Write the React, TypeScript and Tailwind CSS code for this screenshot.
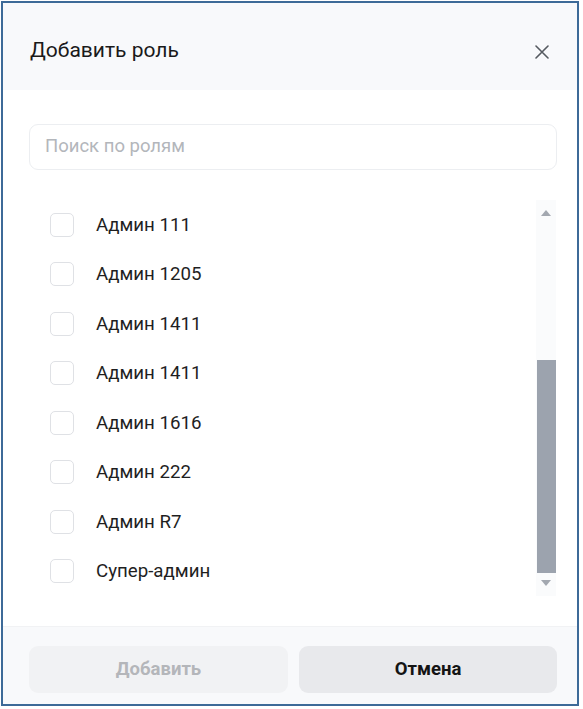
import React, { FC } from "react";

const roles = [
  "Админ 111",
  "Админ 1205",
  "Админ 1411",
  "Админ 1411",
  "Админ 1616",
  "Админ 222",
  "Админ R7",
  "Супер-админ",
];

const RoleRow: FC<{ name: string }> = ({ name }) => (
  <div className="flex h-[49.5px] items-center">
    <span className="ml-[47px] h-[24px] w-[24px] rounded-[5px] border border-[#dfe1e5] bg-white" />
    <span className="ml-[22px] text-[18.7px] text-[#1f1f1f]">{name}</span>
  </div>
);

// Fake scrollbar, matches the screenshot's native bar
const ScrollBar: FC = () => (
  <div className="flex w-[20px] flex-col items-center bg-[#fafbfc]">
    <div className="flex h-[26px] items-center justify-center">
      <svg width="10" height="6" viewBox="0 0 10 6">
        <path d="M5 0 L10 6 L0 6 Z" fill="#a3a8b0" />
      </svg>
    </div>
    <div className="h-[134px]" />
    <div className="h-[213px] w-[19px] bg-[#9ca3ae]" />
    <div className="flex h-[20px] items-center justify-center">
      <svg width="10" height="6" viewBox="0 0 10 6">
        <path d="M0 0 L10 0 L5 6 Z" fill="#a3a8b0" />
      </svg>
    </div>
  </div>
);

export default function App() {
  return (
    <div
      className="h-[709px] w-[583px] bg-white pl-[1px] pt-[1px]"
      style={{ fontFamily: "Roboto, 'Noto Sans', sans-serif" }}
    >
      <div className="flex h-[705px] w-[578px] flex-col border-2 border-[#3d6a98] bg-white">
        {/* Header */}
        <div className="flex h-[87px] items-center justify-between bg-[#f8f9fb] pl-[27px] pr-[28px]">
          <span className="pt-[9px] text-[21px] text-[#1a1a1a]">Добавить роль</span>
          <svg width="14" height="14" viewBox="0 0 14 14" className="mt-[10px]">
            <path d="M1 1 L13 13 M13 1 L1 13" stroke="#555a60" strokeWidth="1.6" strokeLinecap="round" />
          </svg>
        </div>

        {/* Search */}
        <div className="pl-[26px] pt-[34px]">
          <div className="flex h-[46px] w-[528px] items-center rounded-[9px] border border-[#eceef1] bg-white px-[15px]">
            <span className="text-[18.5px] text-[#b3b6bb]">Поиск по ролям</span>
          </div>
        </div>

        {/* List */}
        <div className="flex pt-[30px]">
          <div className="flex w-[533px] flex-col">
            {roles.map((r, i) => (
              <RoleRow key={i} name={r} />
            ))}
          </div>
          <ScrollBar />
        </div>

        {/* Footer */}
        <div className="mt-auto flex h-[78px] gap-[11px] border-t border-[#f1f2f4] bg-[#f8f9fb] pl-[26px] pt-[19px]">
          <button className="h-[47px] w-[259px] rounded-[9px] bg-[#f1f2f4] text-[18.5px] font-bold text-[#b4b6ba]">
            Добавить
          </button>
          <button className="h-[47px] w-[258px] rounded-[9px] bg-[#e8e9ec] text-[18.5px] font-bold text-[#141414]">
            Отмена
          </button>
        </div>
      </div>
    </div>
  );
}
